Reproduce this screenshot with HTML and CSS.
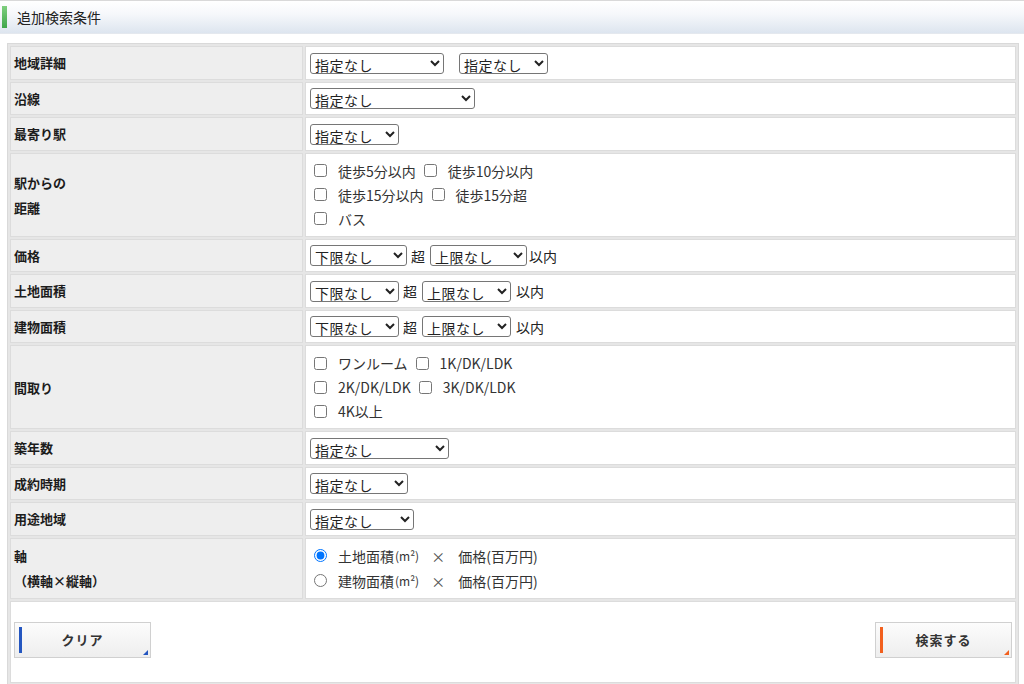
FILE: index.html
```html
<!DOCTYPE html>
<html lang="ja">
<head>
<meta charset="utf-8">
<title>追加検索条件</title>
<link rel="stylesheet" href="styles.css">
</head>
<body>
<div class="heading"><span class="heading-bar"></span><span class="heading-text">追加検索条件</span></div>
<div class="content">
<table class="cond">
  <tr class="r1">
    <th>地域詳細</th>
    <td><select class="w134"><option>指定なし</option></select><select class="w89 ml14"><option>指定なし</option></select></td>
  </tr>
  <tr class="r1">
    <th>沿線</th>
    <td><select class="w165"><option>指定なし</option></select></td>
  </tr>
  <tr class="r1">
    <th>最寄り駅</th>
    <td><select class="w89"><option>指定なし</option></select></td>
  </tr>
  <tr class="r3">
    <th>駅からの<br>距離</th>
    <td>
      <div class="line"><label><input type="checkbox">徒歩5分以内</label><label><input type="checkbox">徒歩10分以内</label></div>
      <div class="line"><label><input type="checkbox">徒歩15分以内</label><label><input type="checkbox">徒歩15分超</label></div>
      <div class="line"><label><input type="checkbox">バス</label></div>
    </td>
  </tr>
  <tr class="r1">
    <th>価格</th>
    <td><select class="w97"><option>下限なし</option></select><span class="sep">超</span><select class="w97"><option>上限なし</option></select><span class="after-tight">以内</span></td>
  </tr>
  <tr class="r1">
    <th>土地面積</th>
    <td><select class="w88"><option>下限なし</option></select><span class="sep">超</span><select class="w88"><option>上限なし</option></select><span class="after">以内</span></td>
  </tr>
  <tr class="r1">
    <th>建物面積</th>
    <td><select class="w88"><option>下限なし</option></select><span class="sep">超</span><select class="w88"><option>上限なし</option></select><span class="after">以内</span></td>
  </tr>
  <tr class="r3">
    <th>間取り</th>
    <td>
      <div class="line"><label><input type="checkbox">ワンルーム</label><label><input type="checkbox">1K/DK/LDK</label></div>
      <div class="line"><label><input type="checkbox">2K/DK/LDK</label><label><input type="checkbox">3K/DK/LDK</label></div>
      <div class="line"><label><input type="checkbox">4K以上</label></div>
    </td>
  </tr>
  <tr class="r1">
    <th>築年数</th>
    <td><select class="w138"><option>指定なし</option></select></td>
  </tr>
  <tr class="r1">
    <th>成約時期</th>
    <td><select class="w97b"><option>指定なし</option></select></td>
  </tr>
  <tr class="r1">
    <th>用途地域</th>
    <td><select class="w103"><option>指定なし</option></select></td>
  </tr>
  <tr class="r2">
    <th>軸<br>（横軸×縦軸）</th>
    <td>
      <div class="rline"><label><input type="radio" name="axis" checked>土地面積<span class="unit">(m²)</span><span class="times">×</span>価格(百万円)</label></div>
      <div class="rline"><label><input type="radio" name="axis">建物面積<span class="unit">(m²)</span><span class="times">×</span>価格(百万円)</label></div>
    </td>
  </tr>
  <tr class="rbtn">
    <td colspan="2">
      <div class="btns">
        <button type="button" class="btn btn-clear">クリア</button>
        <button type="button" class="btn btn-search">検索する</button>
      </div>
    </td>
  </tr>
</table>
</div>
</body>
</html>
```
FILE: styles.css
```css
* { box-sizing: border-box; }
html, body { margin: 0; padding: 0; background: #fff; }
body {
  font-family: "Noto Sans CJK JP", "Noto Sans", sans-serif;
  font-size: 13px;
  color: #333;
  width: 1024px;
  height: 684px;
  overflow: hidden;
}
.heading {
  height: 34px;
  border-top: 1px solid #d9d9d9;
  border-bottom: 1px solid #e4e8ee;
  background: linear-gradient(to bottom, #ffffff 0%, #f6f8fb 40%, #dde5ef 100%);
  display: flex;
  align-items: center;
  padding-left: 2px;
}
.heading-bar {
  width: 5px;
  height: 22px;
  background: linear-gradient(to bottom, #7fcf7f, #3fa64a);
  margin-right: 10px;
}
.heading-text {
  font-size: 14px;
  color: #222;
  line-height: 1;
}
.content {
  padding: 9px 5px 0 7px;
}
.cond {
  width: 1012px;
  border-collapse: separate;
  border-spacing: 2px;
  background: #e6e6e6;
  border: 1px solid #d9d9d9;
}
.cond th, .cond td {
  border: 1px solid #dcdcdc;
  vertical-align: middle;
}
.cond th {
  width: 293px;
  background: #eeeeee;
  text-align: left;
  font-weight: bold;
  color: #1c1c1c;
  font-size: 13px;
  padding: 0 3px;
  line-height: 25px;
}
.cond td {
  background: #fff;
  padding: 0 4px;
  line-height: 20px;
}
.r1 th, .r1 td { height: 33.5px; }
.r3 th, .r3 td { height: 84px; }
.r2 th, .r2 td { height: 61px; }
.cond .rbtn td { height: 82px; padding: 20px 3px 0 3px; vertical-align: top; }

select {
  height: 21px;
  font-family: "Noto Sans CJK JP", sans-serif;
  font-size: 14px;
  letter-spacing: 0.5px;
  color: #222;
  border: 1px solid #767676;
  border-radius: 3px;
  background: #fff;
  padding: 0 1px 0 0;
  vertical-align: middle;
  margin: 0;
}
.w134 { width: 134px; }
.w89 { width: 89px; }
.w165 { width: 165px; }
.w97 { width: 97px; }
.w88 { width: 89px; }
.w138 { width: 139px; }
.w97b { width: 98px; }
.w103 { width: 104px; }
.ml14 { margin-left: 15px; }
.sep { margin: 0 5px 0 4px; font-size: 14px; color: #222; vertical-align: middle; }
.after-tight { margin-left: 2px; font-size: 14px; color: #222; vertical-align: middle; }
.after { margin-left: 5px; font-size: 14px; color: #222; vertical-align: middle; }

.line, .rline {
  height: 24px;
  display: flex;
  align-items: center;
  font-size: 14px;
  color: #333;
}
.rline { height: 25px; }
.line label, .rline label {
  display: inline-flex;
  align-items: center;
  margin-right: 4px;
}
.unit { font-size: 12px; margin-left: 1px; }
.times { margin: 0 13px 0 12px; color: #555; }
input[type="checkbox"], input[type="radio"] {
  width: 13px;
  height: 13px;
  margin: 0 11px 0 4px;
}

.btns {
  display: flex;
  justify-content: space-between;
  align-items: center;
}
.btn {
  position: relative;
  width: 137px;
  height: 36px;
  border: 1px solid #d0d0d0;
  background: linear-gradient(to bottom, #fcfcfc, #eeeeee);
  font-family: "Noto Sans CJK JP", sans-serif;
  font-weight: bold;
  font-size: 13px;
  color: #333;
  letter-spacing: 1px;
  padding: 0;
  cursor: pointer;
}
.btn::before {
  content: "";
  position: absolute;
  left: 4px;
  top: 4px;
  bottom: 4px;
  width: 3px;
}
.btn::after {
  content: "";
  position: absolute;
  right: 2px;
  bottom: 2px;
  width: 0;
  height: 0;
  border-style: solid;
  border-width: 0 0 5px 5px;
  border-color: transparent;
}
.btn-clear::before { background: #2456c0; }
.btn-clear::after { border-bottom-color: #2456c0; }
.btn-search::before { background: #f2601e; }
.btn-search::after { border-bottom-color: #f2601e; }
```
